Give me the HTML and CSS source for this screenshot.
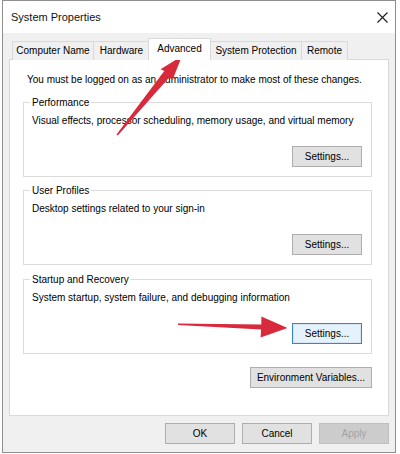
FILE: index.html
```html
<!DOCTYPE html>
<html>
<head>
<meta charset="utf-8">
<link rel="stylesheet" href="styles.css">
</head>
<body>
<div class="window">
  <div class="titlebar">
    <span class="title">System Properties</span>
    <svg class="close" width="11" height="11" viewBox="0 0 11 11"><path d="M0.5 0.5 L10.5 10.5 M10.5 0.5 L0.5 10.5" stroke="#1a1a1a" stroke-width="1.1" fill="none"/></svg>
  </div>
  <div class="body">
    <div class="tabs">
      <div class="tab tab-name">Computer Name</div>
      <div class="tab tab-hw">Hardware</div>
      <div class="tab tab-adv active">Advanced</div>
      <div class="tab tab-sp">System Protection</div>
      <div class="tab tab-remote">Remote</div>
    </div>
    <div class="panel">
      <p class="note">You must be logged on as an Administrator to make most of these changes.</p>
      <fieldset class="group">
        <legend>Performance</legend>
        <p class="desc">Visual effects, processor scheduling, memory usage, and virtual memory</p>
        <div class="actions"><button class="btn">Settings...</button></div>
      </fieldset>
      <fieldset class="group">
        <legend>User Profiles</legend>
        <p class="desc">Desktop settings related to your sign-in</p>
        <div class="actions"><button class="btn">Settings...</button></div>
      </fieldset>
      <fieldset class="group group-last">
        <legend>Startup and Recovery</legend>
        <p class="desc">System startup, system failure, and debugging information</p>
        <div class="actions"><button class="btn focused">Settings...</button></div>
      </fieldset>
      <div class="env-row"><button class="btn env">Environment Variables...</button></div>
    </div>
    <div class="footer">
      <button class="btn">OK</button>
      <button class="btn">Cancel</button>
      <button class="btn disabled">Apply</button>
    </div>
  </div>
</div>
<svg class="annotations" width="400" height="454" viewBox="0 0 400 454">
  <polygon fill="#d82a3d" points="116.5,134.5 164.3,71.1 160.5,69.3 182,56 172.7,79.5 168.9,77.7 117.8,135.6"/>
  <polygon fill="#d82a3d" points="178,323.5 261.3,324.6 261.4,316.5 287.5,328 260.6,337.5 261.1,329.4 178,324.9"/>
</svg>
</body>
</html>
```
FILE: styles.css
```css
* { box-sizing: border-box; }
html, body { margin: 0; padding: 0; }
body {
  width: 400px;
  height: 454px;
  background: #ffffff;
  font-family: "Liberation Sans", Arial, sans-serif;
  font-size: 10px;
  color: #000;
  overflow: hidden;
}
.window {
  margin-left: 2px;
  width: 394px;
  border: 1px solid #8e8e8e;
  background: #f0f0f0;
}
.titlebar {
  height: 32px;
  background: #ffffff;
  display: flex;
  align-items: center;
  justify-content: space-between;
  padding: 0 7px 0 8px;
}
.title { font-size: 11px; color: #111; }
.close { display: block; }
.body {
  padding: 5px 6px 8px 6px;
}
.tabs {
  display: flex;
  align-items: flex-end;
  padding-left: 3px;
  margin-bottom: -1px;
  position: relative;
  z-index: 1;
}
.tab {
  height: 19px;
  line-height: 17px;
  padding: 0;
  text-align: center;
  border: 1px solid #d9d9d9;
  border-bottom: none;
  background: #f0f0f0;
  margin-right: -1px;
  white-space: nowrap;
}
.tab-name { width: 82px; }
.tab-hw { width: 57px; }
.tab-adv { width: 63px; }
.tab-sp { width: 92px; }
.tab-remote { width: 47px; }
.tab.active {
  height: 22px;
  line-height: 19px;
  background: #ffffff;
  margin: 0 -1px 0 -1px;
  position: relative;
  z-index: 2;
}
.panel {
  height: 357px;
  background: #ffffff;
  border: 1px solid #d9d9d9;
  padding: 0 16px 0 13px;
}
.note {
  margin: 12px 0 0 4px;
  line-height: 15px;
}
.group {
  margin: 8px 0 0 0;
  border: 1px solid #dcdcdc;
  padding: 0 9px 9px 8px;
  min-width: 0;
}
.group + .group { margin-top: 6px; }
.group + .group-last { margin-top: 7px; }
.group legend {
  padding: 0 2px;
  margin-left: -2px;
  line-height: 15px;
}
.desc {
  margin: 3px 0 0 0;
  line-height: 15px;
}
.actions {
  display: flex;
  justify-content: flex-end;
  margin-top: 18px;
}
.btn {
  font-family: inherit;
  font-size: 10px;
  color: #000;
  height: 21px;
  width: 70px;
  padding: 0;
  background: #e1e1e1;
  border: 1px solid #adadad;
  border-radius: 0;
  line-height: 19px;
}
.btn.focused {
  background: #e5f1fb;
  border-color: #3b83c4;
  box-shadow: inset 0 0 0 1px #d4e6f6;
}
.btn.env { width: 122px; }
.env-row {
  display: flex;
  justify-content: flex-end;
  margin-top: 13px;
}
.footer {
  display: flex;
  justify-content: flex-end;
  gap: 7px;
  margin-top: 7px;
}
.btn.disabled {
  background: #cccccc;
  border-color: #bfbfbf;
  color: #a3a3a3;
}
.annotations {
  position: absolute;
  left: 0;
  top: 0;
  pointer-events: none;
}
```
